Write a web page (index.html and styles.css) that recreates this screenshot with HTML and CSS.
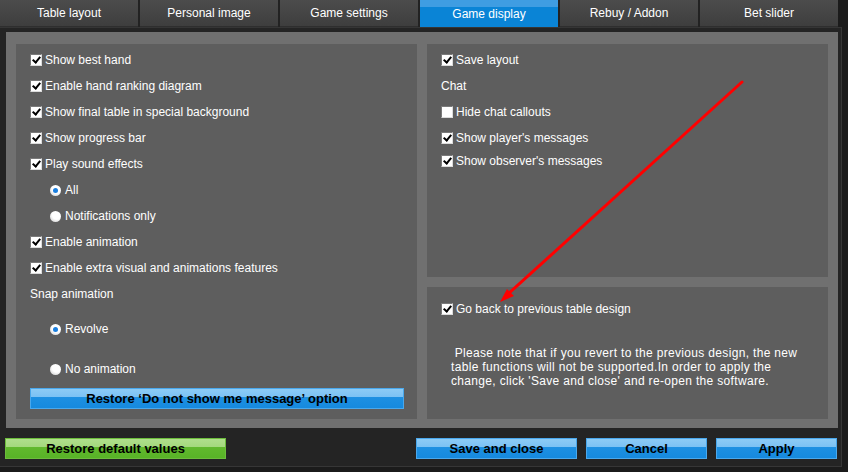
FILE: index.html
```html
<!DOCTYPE html>
<html lang="en">
<head>
    <meta charset="UTF-8">
    <meta name="viewport" content="width=device-width, initial-scale=1.0">
    <title>Game display settings</title>
    <link rel="stylesheet" href="styles.css">
</head>
<body>
    <div class="page">
        <!-- Tabs -->
        <div class="tabs">
            <div class="tab">Table layout</div>
            <div class="tab">Personal image</div>
            <div class="tab">Game settings</div>
            <div class="tab active">Game display</div>
            <div class="tab">Rebuy / Addon</div>
            <div class="tab">Bet slider</div>
        </div>

        <div class="window">
            <div class="frame">
                <!-- Left column -->
                <div class="panel left-panel">
                    <div class="row"><span class="check on"></span>Show best hand</div>
                    <div class="row"><span class="check on"></span>Enable hand ranking diagram</div>
                    <div class="row"><span class="check on"></span>Show final table in special background</div>
                    <div class="row"><span class="check on"></span>Show progress bar</div>
                    <div class="row"><span class="check on"></span>Play sound effects</div>
                    <div class="row sub"><span class="radio on"></span>All</div>
                    <div class="row sub"><span class="radio"></span>Notifications only</div>
                    <div class="row"><span class="check on"></span>Enable animation</div>
                    <div class="row"><span class="check on"></span>Enable extra visual and animations features</div>
                    <div class="row label">Snap animation</div>
                    <div class="row sub revolve"><span class="radio on"></span>Revolve</div>
                    <div class="row sub no-anim"><span class="radio"></span>No animation</div>
                    <button class="btn blue restore-msg">Restore ‘Do not show me message’ option</button>
                </div>

                <!-- Right column -->
                <div class="right-col">
                    <div class="panel right-top">
                        <div class="row"><span class="check on"></span>Save layout</div>
                        <div class="row label">Chat</div>
                        <div class="row"><span class="check"></span>Hide chat callouts</div>
                        <div class="row"><span class="check on"></span>Show player's messages</div>
                        <div class="row tight"><span class="check on"></span>Show observer's messages</div>
                    </div>
                    <div class="panel right-bottom">
                        <div class="row"><span class="check on"></span>Go back to previous table design</div>
                        <p class="note">&nbsp;Please note that if you revert to the previous design, the new<br>table functions will not be supported.In order to apply the<br>change, click 'Save and close' and re-open the software.</p>
                    </div>
                </div>
            </div>

            <!-- Bottom buttons -->
            <div class="actions">
                <button class="btn green restore-defaults">Restore default values</button>
                <button class="btn blue save">Save and close</button>
                <button class="btn blue cancel">Cancel</button>
                <button class="btn blue apply">Apply</button>
            </div>
        </div>

        <!-- Red annotation arrow -->
        <svg class="arrow" width="848" height="472" viewBox="0 0 848 472">
            <line x1="742" y1="82" x2="507" y2="295" stroke="#ff0000" stroke-width="3" stroke-linecap="round"/>
            <polygon points="500,302 514,296 507,289" fill="#ff0000"/>
        </svg>
    </div>
</body>
</html>
```

FILE: styles.css
```css
/* Global */
* {
    margin: 0;
    padding: 0;
    box-sizing: border-box;
    font-family: 'Liberation Sans', Arial, sans-serif;
}

body {
    background: #1b1b1b;
    width: 848px;
    height: 472px;
    overflow: hidden;
    color: #fff;
    font-size: 12px;
}

.page {
    position: relative;
    width: 848px;
    height: 472px;
}

/* Tabs */
.tabs {
    display: flex;
    gap: 2px;
    width: 838px;
    height: 27px;
    background: #222;
}

.tab {
    flex: 1;
    display: flex;
    align-items: center;
    justify-content: center;
    background: linear-gradient(to bottom, #4c4c4c 0, #474747 35%, #3e3e3e 100%);
    border-bottom: 1px solid #2e2e2e;
    font-size: 12px;
    color: #fff;
}

.tab.active {
    background: linear-gradient(to bottom, #3f9de2 0, #3f9de2 26%, #0a84d6 27%, #0a84d6 100%);
    border-bottom: none;
}

/* Window body */
.window {
    width: 842px;
    height: 440px;
    background: #242424;
    border-top: 1px solid #353535;
    border-right: 1px solid #363636;
    border-bottom: 1px solid #363636;
    padding: 4px 3px 0 5px;
}

.frame {
    display: flex;
    gap: 10px;
    height: 396px;
    background: #707070;
    padding: 12px 9px 9px 10px;
    margin-left: 1px;
}

.panel {
    background: #5e5e5e;
    display: flex;
    flex-direction: column;
}

.left-panel {
    width: 401px;
    padding: 3px 14px 0 14px;
}

.right-col {
    width: 401px;
    display: flex;
    flex-direction: column;
    gap: 10px;
}

.right-top {
    height: 233px;
    padding: 3px 14px 0 14px;
}

.right-bottom {
    flex: 1;
    padding: 9px 14px 0 14px;
}

/* Rows */
.row {
    display: flex;
    align-items: center;
    height: 26px;
    white-space: nowrap;
}

.row.sub {
    padding-left: 20px;
}

.row.revolve {
    margin-top: 9px;
}

.row.no-anim {
    margin-top: 14px;
}

.row.tight {
    margin-top: -3px;
}

.check {
    width: 12px;
    height: 12px;
    margin-right: 3px;
    background: #fff;
    border-top: 1px solid #7a7a7a;
    border-left: 1px solid #7a7a7a;
    border-right: 1px solid #dcdcdc;
    border-bottom: 1px solid #dcdcdc;
    position: relative;
    flex-shrink: 0;
}

.check.on::after {
    content: '';
    position: absolute;
    left: 3px;
    top: 0px;
    width: 3px;
    height: 6px;
    border-right: 2px solid #000;
    border-bottom: 2px solid #000;
    transform: rotate(40deg);
}

.radio {
    width: 11px;
    height: 11px;
    margin-right: 4px;
    border-radius: 50%;
    background: radial-gradient(circle at 60% 35%, #ffffff 0, #ffffff 45%, #d8d8d8 80%, #a0a0a0 100%);
    position: relative;
    flex-shrink: 0;
}

.radio.on::after {
    content: '';
    position: absolute;
    left: 3px;
    top: 3px;
    width: 5px;
    height: 5px;
    border-radius: 50%;
    background: #1a7fe0;
}

.note {
    margin-top: 24px;
    padding-left: 10px;
    line-height: 14px;
    font-size: 12px;
    letter-spacing: 0.33px;
}

/* Buttons */
.btn {
    height: 21px;
    font-size: 13px;
    font-weight: bold;
    color: #000;
    cursor: pointer;
    border: 1px solid #4aa8ec;
}

.btn.blue {
    background: linear-gradient(to bottom, #8ccbf6 0, #7cc2f4 40%, #1e90e2 41%, #168ade 100%);
}

.btn.green {
    border-color: #6cbd3c;
    background: linear-gradient(to bottom, #b0df8c 0, #a4d97e 40%, #62b92e 41%, #58b327 100%);
}

.restore-msg {
    margin-top: 6px;
    width: 374px;
}

.actions {
    display: flex;
    gap: 9px;
    padding-top: 10px;
}

.restore-defaults {
    width: 221px;
}

.save {
    margin-left: auto;
    width: 161px;
}

.cancel {
    width: 121px;
}

.apply {
    width: 121px;
    margin-right: 1px;
}

/* Annotation */
.arrow {
    position: absolute;
    left: 0;
    top: 0;
    pointer-events: none;
}
```
